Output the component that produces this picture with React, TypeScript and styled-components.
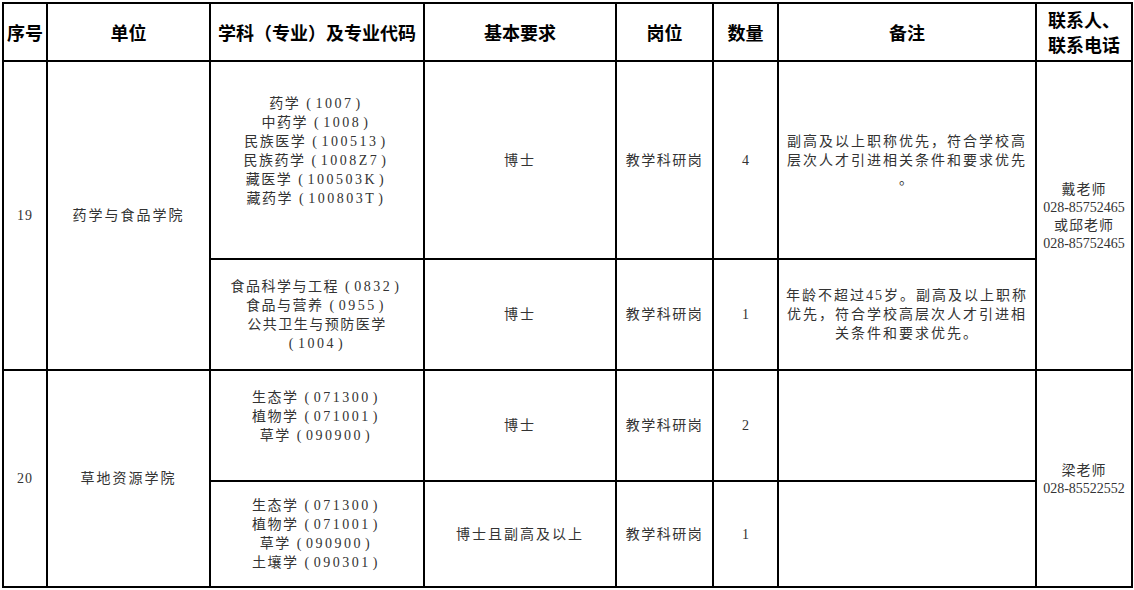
import React from "react";
import styled, { createGlobalStyle } from "styled-components";

const GlobalStyle = createGlobalStyle`
  html, body { margin: 0; padding: 0; background: #ffffff; }
  body { font-family: "Liberation Serif", "Noto Sans CJK SC", serif; }
`;

const Page = styled.div`
  padding: 2px 0 0 2px;
  width: 1132px;
`;

const Table = styled.table`
  border-collapse: collapse;
  table-layout: fixed;
  width: 1129px;
`;

const HeadRow = styled.tr`
  height: 58px;
`;

const BodyRow = styled.tr<{ $h: number }>`
  height: ${(p) => p.$h}px;
`;

const HeadCell = styled.th`
  border: 2px solid #000;
  padding: 0;
  font-family: "Noto Sans CJK SC", sans-serif;
  font-weight: 700;
  font-size: 18px;
  line-height: 23px;
  color: #000;
  text-align: center;
  vertical-align: middle;
  white-space: nowrap;
`;

const HeadLine = styled.div`
  line-height: 25px;
`;

const Cell = styled.td<{ $spacing?: number }>`
  border: 2px solid #000;
  padding: 0;
  font-family: "Liberation Serif", "Noto Sans CJK SC", serif;
  font-size: 14px;
  line-height: 19px;
  color: #333;
  text-align: center;
  vertical-align: middle;
  letter-spacing: ${(p) => (p.$spacing ?? 1.5)}px;
  white-space: nowrap;
`;

const Lines = styled.div<{ $tail?: boolean }>`
  display: flex;
  flex-direction: column;
  align-items: center;
  padding-bottom: ${(p) => (p.$tail ? 19 : 0)}px;
`;

const Line = styled.div`
  white-space: nowrap;
`;

const Code = styled.span<{ $gap: boolean }>`
  font-family: "Liberation Serif", serif;
  letter-spacing: 2.5px;
  margin-left: ${(p) => (p.$gap ? 4 : 0)}px;
`;

const Paren = styled.span`
  margin: 0 2px;
`;

const ContactLine = styled.div<{ $digits?: boolean }>`
  letter-spacing: ${(p) => (p.$digits ? 0 : 1)}px;
  line-height: ${(p) => (p.$digits ? 17 : 19)}px;
`;

type Major = { name: string; code?: string };
type Sub = {
  majors: Major[];
  tail?: boolean;
  req: string;
  post: string;
  count: string;
  remark: string[];
  h: number;
};
type Group = { seq: string; unit: string; contact: string[]; subs: Sub[] };

const groups: Group[] = [
  {
    seq: "19",
    unit: "药学与食品学院",
    contact: ["戴老师", "028-85752465", "或邱老师", "028-85752465"],
    subs: [
      {
        majors: [
          { name: "药学", code: "1007" },
          { name: "中药学", code: "1008" },
          { name: "民族医学", code: "100513" },
          { name: "民族药学", code: "1008Z7" },
          { name: "藏医学", code: "100503K" },
          { name: "藏药学", code: "100803T" },
        ],
        tail: true,
        req: "博士",
        post: "教学科研岗",
        count: "4",
        remark: ["副高及以上职称优先，符合学校高", "层次人才引进相关条件和要求优先", "。"],
        h: 198,
      },
      {
        majors: [
          { name: "食品科学与工程", code: "0832" },
          { name: "食品与营养", code: "0955" },
          { name: "公共卫生与预防医学" },
          { name: "", code: "1004" },
        ],
        req: "博士",
        post: "教学科研岗",
        count: "1",
        remark: ["年龄不超过45岁。副高及以上职称", "优先，符合学校高层次人才引进相", "关条件和要求优先。"],
        h: 111,
      },
    ],
  },
  {
    seq: "20",
    unit: "草地资源学院",
    contact: ["梁老师", "028-85522552"],
    subs: [
      {
        majors: [
          { name: "生态学", code: "071300" },
          { name: "植物学", code: "071001" },
          { name: "草学", code: "090900" },
        ],
        tail: true,
        req: "博士",
        post: "教学科研岗",
        count: "2",
        remark: [],
        h: 111,
      },
      {
        majors: [
          { name: "生态学", code: "071300" },
          { name: "植物学", code: "071001" },
          { name: "草学", code: "090900" },
          { name: "土壤学", code: "090301" },
        ],
        req: "博士且副高及以上",
        post: "教学科研岗",
        count: "1",
        remark: [],
        h: 106,
      },
    ],
  },
];

const widths = [44, 163, 214, 192, 97, 65, 258, 96];

export default function App() {
  return (
    <>
      <GlobalStyle />
      <Page>
        <Table>
          <colgroup>
            {widths.map((w, i) => (
              <col key={i} style={{ width: w }} />
            ))}
          </colgroup>
          <thead>
            <HeadRow>
              <HeadCell>序号</HeadCell>
              <HeadCell>单位</HeadCell>
              <HeadCell>学科（专业）及专业代码</HeadCell>
              <HeadCell>基本要求</HeadCell>
              <HeadCell>岗位</HeadCell>
              <HeadCell>数量</HeadCell>
              <HeadCell>备注</HeadCell>
              <HeadCell>
                <HeadLine>联系人、</HeadLine>
                <HeadLine>联系电话</HeadLine>
              </HeadCell>
            </HeadRow>
          </thead>
          <tbody>
            {groups.map((g) =>
              g.subs.map((s, si) => (
                <BodyRow key={g.seq + si} $h={s.h}>
                  {si === 0 && (
                    <>
                      <Cell rowSpan={g.subs.length} $spacing={1}>
                        {g.seq}
                      </Cell>
                      <Cell rowSpan={g.subs.length} $spacing={2}>
                        {g.unit}
                      </Cell>
                    </>
                  )}
                  <Cell $spacing={1.5}>
                    <Lines $tail={s.tail}>
                      {s.majors.map((m, mi) => (
                        <Line key={mi}>
                          {m.name}
                          {m.code && (
                            <Code $gap={m.name !== ""}>
                              <Paren>(</Paren>
                              {m.code}
                              <Paren>)</Paren>
                            </Code>
                          )}
                        </Line>
                      ))}
                    </Lines>
                  </Cell>
                  <Cell $spacing={2}>{s.req}</Cell>
                  <Cell $spacing={1.5}>{s.post}</Cell>
                  <Cell $spacing={0}>{s.count}</Cell>
                  <Cell $spacing={2}>
                    <Lines>
                      {s.remark.map((r, ri) => (
                        <Line key={ri}>{r}</Line>
                      ))}
                    </Lines>
                  </Cell>
                  {si === 0 && (
                    <Cell rowSpan={g.subs.length} $spacing={0}>
                      <Lines>
                        {g.contact.map((c, ci) => (
                          <ContactLine key={ci} $digits={/^\d/.test(c)}>
                            {c}
                          </ContactLine>
                        ))}
                      </Lines>
                    </Cell>
                  )}
                </BodyRow>
              ))
            )}
          </tbody>
        </Table>
      </Page>
    </>
  );
}
